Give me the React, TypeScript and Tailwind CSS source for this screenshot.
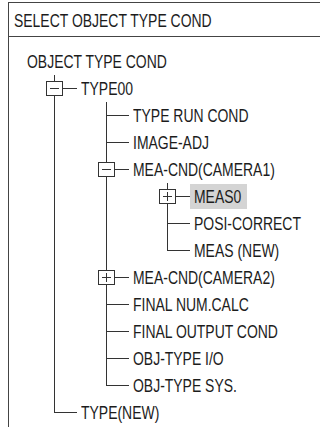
import React from "react";

type TreeNode = {
  label: string;
  box?: "plus" | "minus";
  selected?: boolean;
  indent?: string;
  children?: TreeNode[];
};

const tree: TreeNode = {
  label: "OBJECT TYPE COND",
  indent: "ml-[31px]",
  children: [
    {
      label: "TYPE00",
      box: "minus",
      indent: "ml-[29px]",
      children: [
        { label: "TYPE RUN COND" },
        { label: "IMAGE-ADJ" },
        {
          label: "MEA-CND(CAMERA1)",
          box: "minus",
          indent: "ml-[38px]",
          children: [
            { label: "MEAS0", box: "plus", selected: true },
            { label: "POSI-CORRECT" },
            { label: "MEAS (NEW)" },
          ],
        },
        { label: "MEA-CND(CAMERA2)", box: "plus" },
        { label: "FINAL NUM.CALC" },
        { label: "FINAL OUTPUT COND" },
        { label: "OBJ-TYPE I/O" },
        { label: "OBJ-TYPE SYS." },
      ],
    },
    { label: "TYPE(NEW)" },
  ],
};

// condensed look: Liberation Sans squeezed horizontally
const Text = ({ children }: { children: React.ReactNode }) => (
  <span className="inline-block origin-left scale-x-[0.775] whitespace-nowrap">{children}</span>
);

const ToggleBox = ({ kind }: { kind: "plus" | "minus" }) => (
  <div className="absolute left-[-8px] top-[6px] flex h-[15px] w-[17px] items-center justify-center border border-[#333] bg-white">
    <div className="relative h-[9px] w-[9px]">
      <div className="absolute left-0 top-[4px] h-px w-[9px] bg-[#333]" />
      {kind === "plus" && <div className="absolute left-[4px] top-0 h-[9px] w-px bg-[#333]" />}
    </div>
  </div>
);

const Row = ({ node }: { node: TreeNode }) => (
  <div className="flex h-[27px] items-center">
    {node.selected ? (
      <span className="flex h-[25px] w-[57px] items-center bg-[#d4d4d4] px-[4px]">
        <Text>{node.label}</Text>
      </span>
    ) : (
      <span className="px-[4px]">
        <Text>{node.label}</Text>
      </span>
    )}
  </div>
);

const Children = ({ node }: { node: TreeNode }) => {
  if (!node.children) return null;
  return (
    <div className={node.indent}>
      {node.children.map((child, i) => {
        const last = i === node.children!.length - 1;
        return (
          <div key={child.label} className="relative flex">
            {/* connector: vertical line + elbow */}
            <div className="flex w-[23px] shrink-0 flex-col">
              <div className="h-[14px] border-b border-l border-[#333]" />
              {!last && <div className="flex-1 border-l border-[#333]" />}
            </div>
            {child.box && <ToggleBox kind={child.box} />}
            <div>
              <Row node={child} />
              <Children node={child} />
            </div>
          </div>
        );
      })}
    </div>
  );
};

export default function App() {
  return (
    <div className="h-[427px] w-[322px] overflow-hidden bg-white font-['Liberation_Sans',sans-serif] text-[18px] leading-none text-[#1c1c1c]">
      <div className="ml-[8px] mt-[2px] h-[440px] w-[312px] border-l border-t border-[#444]">
        <div className="flex h-[34px] items-center border-b border-[#444] pl-[5px] pt-[3px]">
          <Text>SELECT OBJECT TYPE COND</Text>
        </div>
        <div className="pl-[14px] pt-[11px]">
          <Row node={tree} />
          <Children node={tree} />
        </div>
      </div>
    </div>
  );
}
